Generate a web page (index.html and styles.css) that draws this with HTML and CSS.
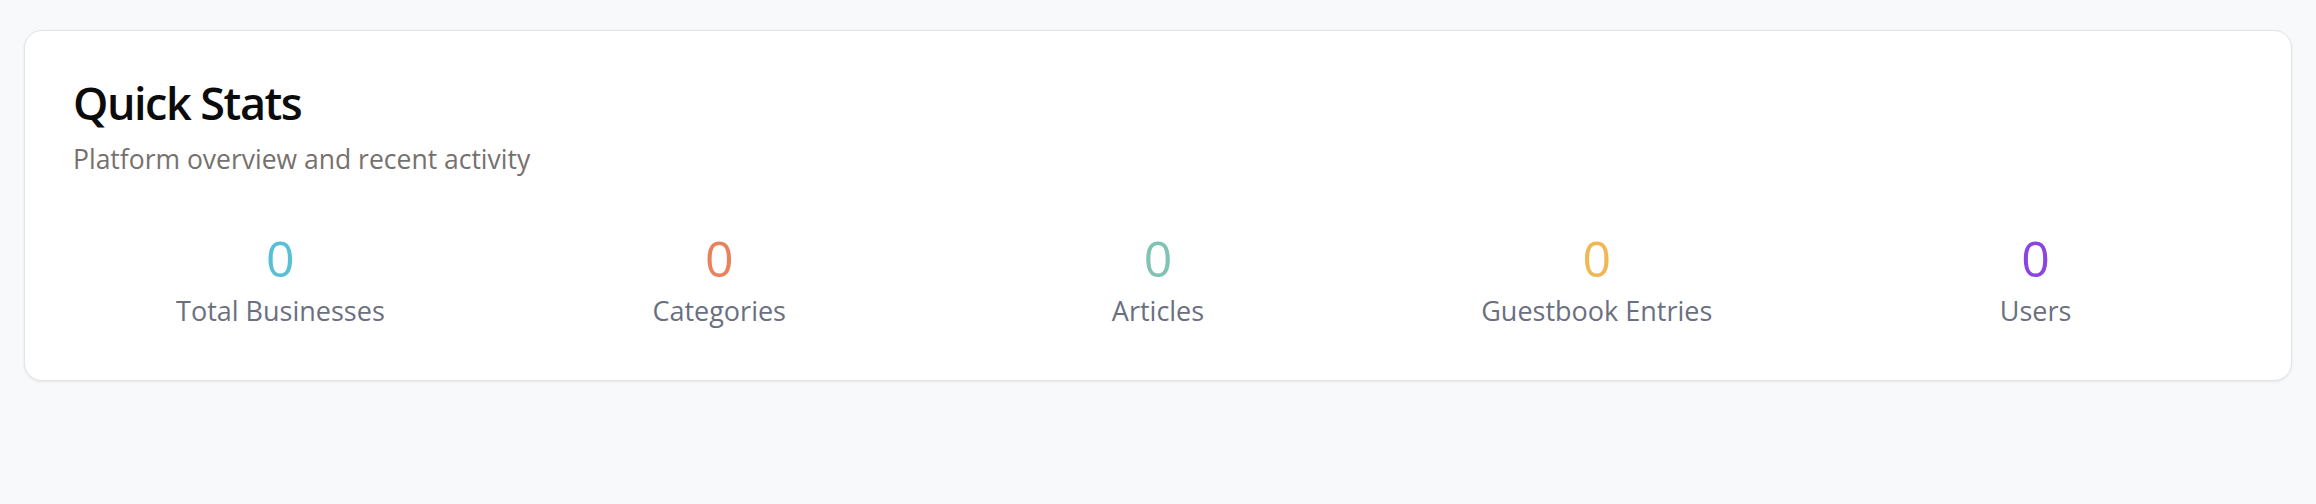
FILE: index.html
```html
<!DOCTYPE html>
<html lang="en">
<head>
<meta charset="utf-8">
<title>Quick Stats</title>
<link rel="stylesheet" href="styles.css">
</head>
<body>
<main class="page">
  <section class="card">
    <header class="card-head">
      <h1 class="title">Quick Stats</h1>
      <p class="subtitle">Platform overview and recent activity</p>
    </header>
    <div class="stats">
      <div class="stat">
        <div class="stat-value c-cyan">0</div>
        <div class="stat-label">Total Businesses</div>
      </div>
      <div class="stat">
        <div class="stat-value c-orange">0</div>
        <div class="stat-label">Categories</div>
      </div>
      <div class="stat">
        <div class="stat-value c-teal">0</div>
        <div class="stat-label">Articles</div>
      </div>
      <div class="stat">
        <div class="stat-value c-yellow">0</div>
        <div class="stat-label">Guestbook Entries</div>
      </div>
      <div class="stat">
        <div class="stat-value c-purple">0</div>
        <div class="stat-label">Users</div>
      </div>
    </div>
  </section>
</main>
</body>
</html>
```

FILE: styles.css
```css
html, body {
  margin: 0;
  padding: 0;
}

body {
  background: #f8f9fa;
  font-family: "Open Sans", "Liberation Sans", sans-serif;
  color: #111;
}

.page {
  padding: 30px 24px;
}

.card {
  background: #ffffff;
  border: 1px solid #e4e4e4;
  border-radius: 18px;
  box-shadow: 0 1px 3px rgba(0, 0, 0, 0.08);
  padding: 45px 48px 51px;
}

.card-head {
  margin-bottom: 54px;
}

.title {
  margin: 0;
  font-size: 45px;
  line-height: 54px;
  font-weight: 600;
  letter-spacing: -1.5px;
  color: #0b0b0b;
}

.subtitle {
  margin: 11px 0 0;
  font-size: 26.5px;
  line-height: 36px;
  color: #76716e;
}

.stats {
  display: grid;
  grid-template-columns: repeat(5, 1fr);
  gap: 24px;
}

.stat {
  display: flex;
  flex-direction: column;
  align-items: center;
  text-align: center;
}

.stat-value {
  font-size: 50px;
  line-height: 54px;
  font-weight: 500;
}

.stat-label {
  margin-top: 8px;
  font-size: 27px;
  line-height: 36px;
  color: #6b7080;
}

.c-cyan { color: #57bfd6; }
.c-orange { color: #e8825a; }
.c-teal { color: #7ec3b3; }
.c-yellow { color: #f0b752; }
.c-purple { color: #8a45e1; }
```
